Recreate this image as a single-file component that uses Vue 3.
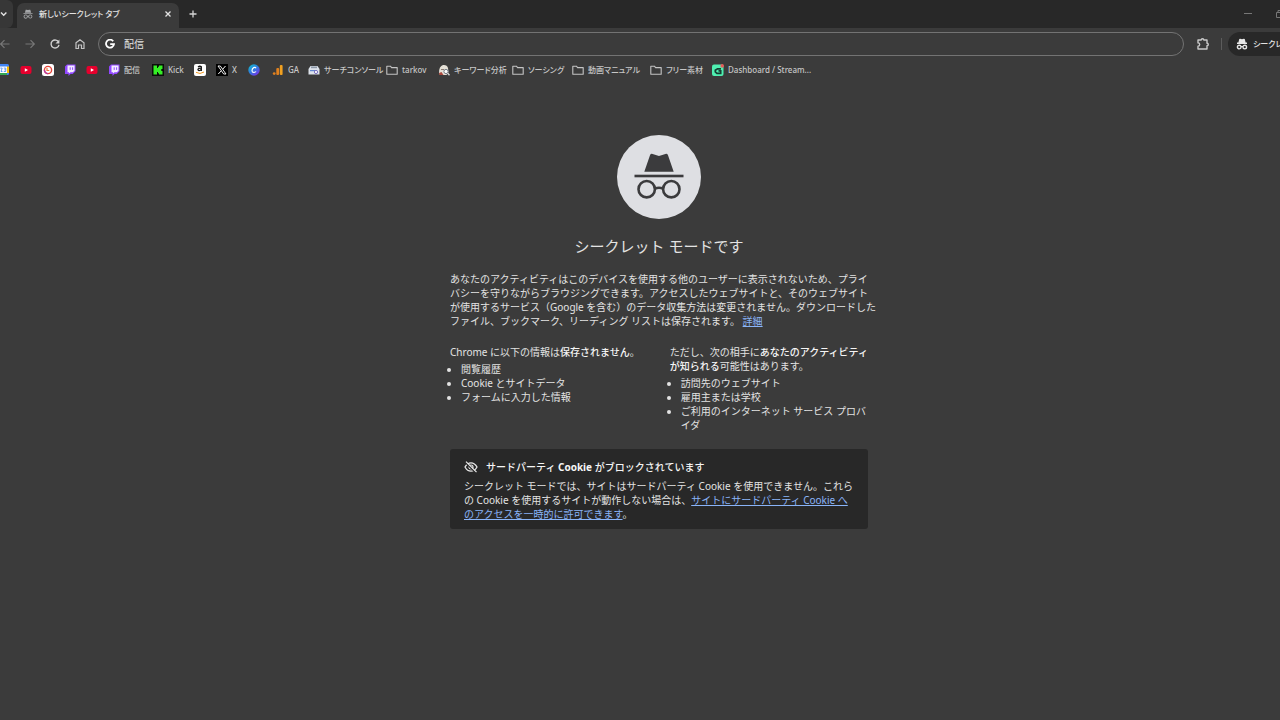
<script setup>
import { ref } from 'vue'

const query = ref('配信')

const bookmarks = [
  { icon: 'calendar', label: '' },
  { icon: 'youtube', label: '' },
  { icon: 'ring', label: '' },
  { icon: 'twitch', label: '' },
  { icon: 'youtube', label: '' },
  { icon: 'twitch', label: '配信' },
  { icon: 'kick', label: 'Kick' },
  { icon: 'amazon', label: '' },
  { icon: 'x', label: 'X' },
  { icon: 'canva', label: '' },
  { icon: 'analytics', label: 'GA' },
  { icon: 'console', label: 'サーチコンソール' },
  { icon: 'folder', label: 'tarkov' },
  { icon: 'keyword', label: 'キーワード分析' },
  { icon: 'folder', label: 'ソーシング' },
  { icon: 'folder', label: '動画マニュアル' },
  { icon: 'folder', label: 'フリー素材' },
  { icon: 'dashboard', label: 'Dashboard / Stream...' },
]
</script>

<template>
  <div class="browser">
    <header>
      <div class="tabstrip">
        <button class="tab-search" aria-label="タブを検索">
          <svg width="8" height="8" viewBox="0 0 8 8"><path d="M1 2.500 3.700 5.200l2.700-2.700" fill="none" stroke="#e3e3e3" stroke-width="1.400" /></svg>
        </button>
        <div class="tab">
          <svg width="10" height="10" viewBox="0 0 24 24" fill="#a5a7a9">
            <path d="M17.500 13a5 5 0 0 0-4.600 3.200q-.9-.5-1.800 0A5 5 0 1 0 11.500 18q.5-.5 1 0A5 5 0 1 0 17.500 13zM6.500 21a3 3 0 1 1 0-6 3 3 0 0 1 0 6zm11 0a3 3 0 1 1 0-6 3 3 0 0 1 0 6zM23 10H1v2h22zM15.500 1.500 12 2.500 8.500 1.500 6.500 2 4.500 9h15L17.500 2z" />
          </svg>
          <span class="tab-title">新しいシークレット タブ</span>
          <button class="icon-btn" aria-label="閉じる">
            <svg width="8" height="8" viewBox="0 0 8 8"><path d="M1.500 1.500l5 5m0-5l-5 5" stroke="#e3e3e3" stroke-width="1.300" /></svg>
          </button>
        </div>
        <button class="icon-btn new-tab" aria-label="新しいタブ">
          <svg width="10" height="10" viewBox="0 0 10 10"><path d="M5 1.500v7M1.500 5h7" stroke="#d5d5d5" stroke-width="1.300" /></svg>
        </button>
        <div class="window-controls">
          <button class="icon-btn" aria-label="最小化">
            <svg width="8" height="10" viewBox="0 0 8 10"><path d="M0 4.500h8" stroke="#777" /></svg>
          </button>
          <button class="icon-btn clip" aria-label="最大化">
            <svg width="8" height="10" viewBox="0 0 8 10"><path d="M.5 3.500h5v5h-5zM2 3V1.500h5v5H6" fill="none" stroke="#777" /></svg>
          </button>
        </div>
      </div>

      <div class="toolbar">
        <div class="nav">
          <button class="icon-btn" aria-label="戻る">
            <svg width="12" height="12" viewBox="0 0 12 12"><path d="M10.500 6H2M5.500 2.200 1.700 6l3.800 3.800" fill="none" stroke="#777" stroke-width="1.200" /></svg>
          </button>
          <button class="icon-btn" aria-label="進む">
            <svg width="12" height="12" viewBox="0 0 12 12"><path d="M1.500 6H10M6.500 2.200 10.300 6 6.500 9.800" fill="none" stroke="#777" stroke-width="1.200" /></svg>
          </button>
          <button class="icon-btn" aria-label="再読み込み">
            <svg width="12" height="12" viewBox="0 0 12 12"><path d="M9.700 4.300A4 4 0 1 0 10 6.900" fill="none" stroke="#d0d0d0" stroke-width="1.400" /><path d="M10.400 1.500v4H6.500z" fill="#d0d0d0" /></svg>
          </button>
          <button class="icon-btn" aria-label="ホーム">
            <svg width="12" height="12" viewBox="0 0 12 12"><path d="M2 4.800 6 1.700l4 3.100v5.700H7.500V7h-3v3.500H2z" fill="none" stroke="#c4c4c4" stroke-width="1.200" /></svg>
          </button>
        </div>
        <label class="omnibox">
          <svg width="10" height="10" viewBox="0 0 10 10"><path d="M8.200 2.200A4 4 0 1 0 9 5.200H5.200" fill="none" stroke="#fff" stroke-width="1.800" /></svg>
          <input v-model="query" type="text" aria-label="アドレス検索バー" />
        </label>
        <button class="icon-btn puzzle" aria-label="拡張機能">
          <svg width="14" height="14" viewBox="0 0 14 14"><path d="M2 3h3.200a1.300 1.300 0 0 1 2.600 0H11v3.200a1.300 1.300 0 0 1 0 2.600V12H2V9.300a1.600 1.600 0 0 0 0-3.400z" fill="none" stroke="#c9c9c9" stroke-width="1.400" stroke-linejoin="round" /></svg>
        </button>
        <span class="divider"></span>
        <button class="profile">
          <svg width="12" height="12" viewBox="0 0 24 24" fill="#e8e8e8">
            <path d="M17.500 13a5 5 0 0 0-4.600 3.200q-.9-.5-1.800 0A5 5 0 1 0 11.500 18q.5-.5 1 0A5 5 0 1 0 17.500 13zM6.500 20.500a2.300 2.300 0 1 1 0-4.600 2.300 2.300 0 0 1 0 4.600zm11 0a2.300 2.300 0 1 1 0-4.600 2.300 2.300 0 0 1 0 4.600zM22 9H2v3h20zM15.500 1.500 12 2.500 8.500 1.500 6.500 2 4.500 10h15L17.500 2z" />
          </svg>
          <span>シークレット</span>
        </button>
      </div>

      <nav class="bookmarks" aria-label="ブックマーク">
        <a v-for="(b, i) in bookmarks" :key="i" href="#" :aria-label="b.label || b.icon">
          <svg v-if="b.icon === 'calendar'" width="12" height="12" viewBox="0 0 12 12"><rect width="11" height="11" rx="1.500" fill="#4285f4" /><path d="M9 2.500h2v6.500H9z" fill="#fbbc04" /><path d="M1 9h8v2H1z" fill="#34a853" /><path d="M1 2.500h8V9H1z" fill="#fff" /><path d="M2.300 4.100h1.900L3 7.500h1.500M5.800 4.100h2v3.400h-2M6.300 5.800h1.500" fill="none" stroke="#4285f4" stroke-width=".8" /></svg>
          <svg v-else-if="b.icon === 'youtube'" width="12" height="12" viewBox="0 0 12 12"><rect y="2" x=".5" width="11" height="8" rx="2" fill="#e6002d" /><path d="M4.800 4.200 8 6 4.800 7.800z" fill="#fff" /></svg>
          <svg v-else-if="b.icon === 'ring'" width="12" height="12" viewBox="0 0 12 12"><rect width="12" height="12" rx="2.500" fill="#fff" /><circle cx="6" cy="6" r="3.600" fill="none" stroke="#e5453b" stroke-width="1.400" /><path d="M2.400 6A3.600 3.600 0 0 0 6 9.600" fill="none" stroke="#b93a9b" stroke-width="1.400" /><path d="M5 4v2.500h2.300" fill="none" stroke="#ed7a35" stroke-width="1.200" /></svg>
          <svg v-else-if="b.icon === 'twitch'" width="12" height="12" viewBox="0 0 12 12"><path d="M3 .5h8.500v6.700L8.700 10H6.500L4.500 12v-2H1V2.500z" fill="#9146ff" /><path d="M3.500 1.500h7v5.200L8.800 8.300H6.500L5 9.600V8.300H3.500z" fill="#f3edff" /><path d="M6.200 3.300v2.600M8.600 3.300v2.600" stroke="#9146ff" /></svg>
          <svg v-else-if="b.icon === 'kick'" width="12" height="12" viewBox="0 0 12 12"><rect width="12" height="12" fill="#0b0d0b" /><path d="M1.500 1.500H5V4h1V2.800h1V1.500h3.500V5h-1.200v2h1.200v3.500H7V9.300H6V8H5v2.500H1.500z" fill="#35ee25" /></svg>
          <svg v-else-if="b.icon === 'amazon'" width="12" height="12" viewBox="0 0 12 12"><rect width="12" height="12" rx="2" fill="#fff" /><path d="M4 3.100Q5.900 1.500 7.300 2.800V7M7.300 4.200Q3.800 4 4 5.800 4.600 7.400 7.300 5.500" fill="none" stroke="#111" stroke-width="1.300" /><path d="M2 8.300q4 2.500 8-.3" fill="none" stroke="#f29a24" /></svg>
          <svg v-else-if="b.icon === 'x'" width="12" height="12" viewBox="0 0 12 12"><rect width="12" height="12" fill="#000" /><path d="M2 2h2.300L10 10H7.700z" fill="none" stroke="#fff" stroke-width=".9" /><path d="M9.500 2 6.700 5.200M5.300 6.800 2.300 10" stroke="#fff" /></svg>
          <svg v-else-if="b.icon === 'canva'" width="12" height="12" viewBox="0 0 12 12"><defs><linearGradient id="canva-fill" x2=".8" y2="1"><stop offset="0" stop-color="#12c6cc" /><stop offset=".5" stop-color="#2c7fe0" /><stop offset="1" stop-color="#7b2ee6" /></linearGradient></defs><circle cx="6" cy="6" r="5.700" fill="url(#canva-fill)" /><path d="M8 4.200C7.200 2.500 4 3.500 4 6.700 4.200 9.300 7.200 8.500 8 7.500" fill="none" stroke="#fff" stroke-width="1.200" /></svg>
          <svg v-else-if="b.icon === 'analytics'" width="12" height="12" viewBox="0 0 12 12"><rect x="7.800" y="1" width="2.800" height="10" rx="1" fill="#f0a020" /><rect x="4.300" y="4" width="2.800" height="7" rx="1" fill="#e0801f" /><circle cx="2.200" cy="9.600" r="1.400" fill="#e0801f" /></svg>
          <svg v-else-if="b.icon === 'console'" width="12" height="12" viewBox="0 0 12 12"><path d="M2.500 2h7l2 3v5.500H.5V5z" fill="#dce2ea" /><path d="M3 2.500h6v1.700H3z" fill="#8d99a8" /><path d="M2 6h5v1.200H2z" fill="#6288d0" /><circle cx="8" cy="8" r="1.600" fill="#fff" stroke="#7a6fc0" /></svg>
          <svg v-else-if="b.icon === 'folder'" width="12" height="12" viewBox="0 0 12 12"><path d="M.8 2.200h3.600l1.200 1.400h5.600v6.600H.8z" fill="none" stroke="#c4c4c4" stroke-width="1.100" stroke-linejoin="round" /></svg>
          <svg v-else-if="b.icon === 'keyword'" width="12" height="12" viewBox="0 0 12 12"><path d="M1 9Q1 2 5 1q4-.5 5 3l.5 4-2 3H2z" fill="#e5e1d7" /><path d="M1 9l2.500-1 2 3H1.500z" fill="#a8483e" /><path d="M3 5.500h3" stroke="#8a7d74" /><circle cx="8" cy="7.500" r="2.100" fill="#fff" stroke="#717883" /><path d="m9.500 9 2 2.300" stroke="#dadada" stroke-width="1.300" /></svg>
          <svg v-else width="12" height="12" viewBox="0 0 12 12"><rect y=".5" width="11.500" height="11.500" rx="2" fill="#4ff0b1" /><path d="M9 4.800H5.500L3.300 6.200v1.600L5 9.300h3.700V6.800H6.500" fill="none" stroke="#153f33" stroke-width="1.700" /><circle cx="10.200" cy="1.900" r="1.800" fill="#e65b59" /></svg>
          <span v-if="b.label">{{ b.label }}</span>
        </a>
      </nav>
    </header>

    <main>
      <div class="content">
        <svg class="hero" width="84" height="84" viewBox="0 0 84 84">
          <circle cx="42" cy="42" r="42" fill="#dedfe3" />
          <g fill="#3b3b3d">
            <path d="M27.300 36.800 33 20.200q.7-1.800 2.600-1.300l6.400 2 6.400-2q1.900-.5 2.600 1.300l5.700 16.600z" />
            <rect x="17.500" y="39.700" width="49" height="2.600" />
          </g>
          <g fill="none" stroke="#3b3b3d" stroke-width="2.600">
            <circle cx="29.700" cy="54.200" r="8.200" />
            <circle cx="54.300" cy="54.200" r="8.200" />
            <path d="M38 53.500q4-1.500 8 0" />
          </g>
        </svg>
        <h1>シークレット モードです</h1>
        <p>
          あなたのアクティビティはこのデバイスを使用する他のユーザーに表示されないため、プライ<br />バシーを守りながらブラウジングできます。アクセスしたウェブサイトと、そのウェブサイト<br />が使用するサービス（Google を含む）のデータ収集方法は変更されません。ダウンロードした<br />ファイル、ブックマーク、リーディング リストは保存されます。 <a href="#">詳細</a>
        </p>
        <div class="columns">
          <section>
            <p>Chrome に以下の情報は<em>保存されません</em>。</p>
            <ul>
              <li>閲覧履歴</li>
              <li>Cookie とサイトデータ</li>
              <li>フォームに入力した情報</li>
            </ul>
          </section>
          <section>
            <p>ただし、次の相手に<em>あなたのアクティビティ<br />が知られる</em>可能性はあります。</p>
            <ul>
              <li>訪問先のウェブサイト</li>
              <li>雇用主または学校</li>
              <li>ご利用のインターネット サービス プロバ<br />イダ</li>
            </ul>
          </section>
        </div>
        <section class="notice">
          <h2>
            <svg width="14" height="14" viewBox="0 0 14 14"><path d="M1 7q2.300-4.200 6-4.200T13 7q-2.300 4.200-6 4.200T1 7z" fill="none" stroke="#e8e8e8" stroke-width="1.300" /><circle cx="7" cy="7" r="2" fill="none" stroke="#e8e8e8" stroke-width="1.200" /><path d="m2 3 9.500 9.500" stroke="#282828" stroke-width="1.500" /><path d="m2 1.700 10.500 10.500" stroke="#e8e8e8" stroke-width="1.200" /></svg>
            <span>サードパーティ <b>Cookie</b> がブロックされています</span>
          </h2>
          <p>
            シークレット モードでは、サイトはサードパーティ Cookie を使用できません。これら<br />の Cookie を使用するサイトが動作しない場合は、<a href="#">サイトにサードパーティ Cookie へ<br />のアクセスを一時的に許可できます</a>。
          </p>
        </section>
      </div>
    </main>
  </div>
</template>

<style>
body {
  background: #3b3b3b;
}
</style>

<style scoped>
.browser {
  min-height: 100vh;
  overflow: hidden;
  background: #3b3b3b;
  color: #e3e3e3;
  font: 10px/14px "Noto Sans", "Noto Sans CJK JP", sans-serif;
}
button {
  border: 0;
  margin: 0;
  background: none;
  color: inherit;
  font: inherit;
}
svg {
  display: block;
  flex: none;
}
.icon-btn {
  display: flex;
  padding: 0;
}
.tabstrip {
  display: flex;
  align-items: center;
  height: 28px;
  background: #282828;
}
.tab-search {
  align-self: stretch;
  display: flex;
  align-items: center;
  width: 13px;
  padding: 0;
  background: #373737;
  border-radius: 0 6px 6px 0;
}
.tab {
  align-self: stretch;
  display: flex;
  align-items: center;
  box-sizing: border-box;
  width: 162px;
  margin: 3px 0 0 4px;
  padding: 0 7px 3px 6px;
  gap: 6px;
  border-radius: 7px 7px 0 0;
  background: #3b3b3b;
}
.tab-title,
.profile,
.bookmarks {
  font-size: 8px;
  font-weight: 500;
  font-feature-settings: "palt";
  white-space: nowrap;
}
.tab-title {
  flex: 1;
}
.new-tab {
  margin-left: 9px;
}
.window-controls {
  display: flex;
  gap: 24px;
  margin-left: auto;
}
.clip {
  width: 4px;
  overflow: hidden;
}
.toolbar {
  display: flex;
  align-items: center;
  height: 32px;
}
.nav {
  display: flex;
  gap: 13px;
  margin: 0 12px 0 -1px;
}
.omnibox {
  flex: 1;
  display: flex;
  align-items: center;
  gap: 9px;
  box-sizing: border-box;
  height: 24px;
  padding: 0 6px;
  border: 1px solid #737373;
  border-radius: 12px;
}
.omnibox input {
  flex: 1;
  min-width: 0;
  padding: 0;
  border: 0;
  outline: 0;
  background: none;
  color: inherit;
  font: inherit;
}
.puzzle {
  margin: 0 11px 0 12px;
}
.divider {
  width: 1px;
  height: 12px;
  background: #5c5c5c;
}
.profile {
  display: flex;
  align-items: center;
  gap: 5px;
  box-sizing: border-box;
  width: 52px;
  height: 24px;
  margin-left: 6px;
  padding: 0 0 0 8px;
  border-radius: 12px 0 0 12px;
  background: #282828;
}
.bookmarks {
  display: grid;
  grid-template-columns: 22px 22px 22px 22px 22px 44px 42px 22px 32px 24px 36px 78px 52px 74px 60px 78px 62px auto;
  align-items: center;
  height: 20px;
  margin-left: -2px;
  color: #c7c7c7;
}
.bookmarks a {
  display: flex;
  align-items: center;
  gap: 4px;
  color: inherit;
  text-decoration: none;
}
main {
  display: flex;
  justify-content: center;
  padding: 55px 0 0 38px;
}
.content {
  width: 418px;
  white-space: nowrap;
}
.hero {
  margin: 0 auto;
}
h1 {
  margin: 16px 0 15px;
  font-size: 15px;
  line-height: 22px;
  font-weight: 400;
  text-align: center;
}
p {
  margin: 0;
}
em {
  font-style: normal;
  font-weight: 500;
  color: #f5f5f5;
}
a {
  color: #8ab4f8;
}
.columns {
  display: grid;
  grid-template-columns: 1fr 1fr;
  gap: 22px;
  margin: 17px 0;
}
ul {
  margin: 3px 0 0;
  padding-left: 11px;
}
.notice {
  padding: 11px 14px 8px;
  border-radius: 3px;
  background: #282828;
}
h2 {
  display: flex;
  align-items: center;
  gap: 8px;
  margin: 0 0 5px;
  font-size: 10px;
  line-height: 14px;
  font-weight: 500;
  color: #f5f5f5;
}
</style>
